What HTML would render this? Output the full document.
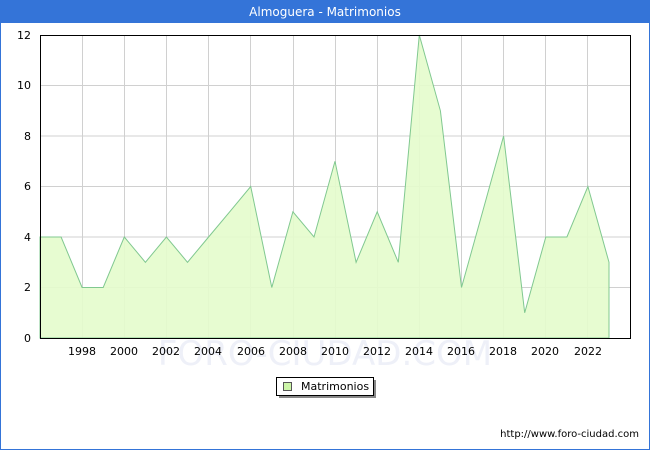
<!DOCTYPE html><html><head><style>
body{margin:0;width:650px;height:450px;overflow:hidden;font-family:"DejaVu Sans","Liberation Sans",sans-serif;}
</style></head><body>
<svg width="650" height="450" xmlns="http://www.w3.org/2000/svg" font-family="DejaVu Sans, Liberation Sans, sans-serif">
<rect x="0.5" y="0.5" width="649" height="449" fill="#fff" stroke="#3474d8"/>
<rect x="0" y="0" width="650" height="23" fill="#3474d8"/>
<text x="325" y="16" fill="#fff" font-size="12" text-anchor="middle">Almoguera - Matrimonios</text>
<text x="325" y="365" fill="#eef0f8" font-size="34" text-anchor="middle">FORO-CIUDAD.COM</text>
<g stroke="#d0d0d0" stroke-width="1">
<line x1="40" y1="287.5" x2="630" y2="287.5"/><line x1="40" y1="237" x2="630" y2="237"/><line x1="40" y1="186.5" x2="630" y2="186.5"/><line x1="40" y1="136" x2="630" y2="136"/><line x1="40" y1="85.5" x2="630" y2="85.5"/>
<line x1="82.5" y1="35" x2="82.5" y2="338"/><line x1="124.5" y1="35" x2="124.5" y2="338"/><line x1="166.5" y1="35" x2="166.5" y2="338"/><line x1="208.5" y1="35" x2="208.5" y2="338"/><line x1="250.5" y1="35" x2="250.5" y2="338"/><line x1="293.5" y1="35" x2="293.5" y2="338"/><line x1="335.5" y1="35" x2="335.5" y2="338"/><line x1="377.5" y1="35" x2="377.5" y2="338"/><line x1="419.5" y1="35" x2="419.5" y2="338"/><line x1="461.5" y1="35" x2="461.5" y2="338"/><line x1="503.5" y1="35" x2="503.5" y2="338"/><line x1="545.5" y1="35" x2="545.5" y2="338"/><line x1="587.5" y1="35" x2="587.5" y2="338"/>
</g>
<polygon fill="#e4fccc" fill-opacity="0.9" stroke="#80c890" stroke-width="1" points="40,338 40,237 61.1,237 82.1,287.5 103.2,287.5 124.3,237 145.4,262.3 166.4,237 187.5,262.3 208.6,237 229.7,211.8 250.7,186.5 271.8,287.5 292.9,211.8 314,237 335,161.3 356.1,262.3 377.2,211.8 398.3,262.3 419.3,35 440.4,110.8 461.5,287.5 482.6,211.8 503.6,136 524.7,312.8 545.8,237 566.9,237 587.9,186.5 609,262.3 609,338"/>
<rect x="40.5" y="35.5" width="590" height="303" fill="none" stroke="#000"/>
<g font-size="11" fill="#000" text-anchor="end">
<text x="31" y="342">0</text><text x="31" y="291">2</text><text x="31" y="241">4</text><text x="31" y="190">6</text><text x="31" y="140">8</text><text x="31" y="89">10</text><text x="31" y="39">12</text>
</g>
<g font-size="11" fill="#000" text-anchor="middle">
<text x="82" y="355">1998</text><text x="124" y="355">2000</text><text x="166" y="355">2002</text><text x="208" y="355">2004</text><text x="251" y="355">2006</text><text x="293" y="355">2008</text><text x="335" y="355">2010</text><text x="377" y="355">2012</text><text x="419" y="355">2014</text><text x="461" y="355">2016</text><text x="503" y="355">2018</text><text x="545" y="355">2020</text><text x="588" y="355">2022</text>
</g>
<rect x="279" y="380" width="97" height="18" fill="#888"/>
<rect x="276.5" y="377.5" width="97" height="18" fill="#fff" stroke="#000"/>
<rect x="283.5" y="382.5" width="8" height="8" fill="#ccf5a8" stroke="#555"/>
<text x="301" y="390" font-size="11">Matrimonios</text>
<text x="639" y="437" font-size="10" text-anchor="end">http://www.foro-ciudad.com</text>
</svg>
</body></html>
